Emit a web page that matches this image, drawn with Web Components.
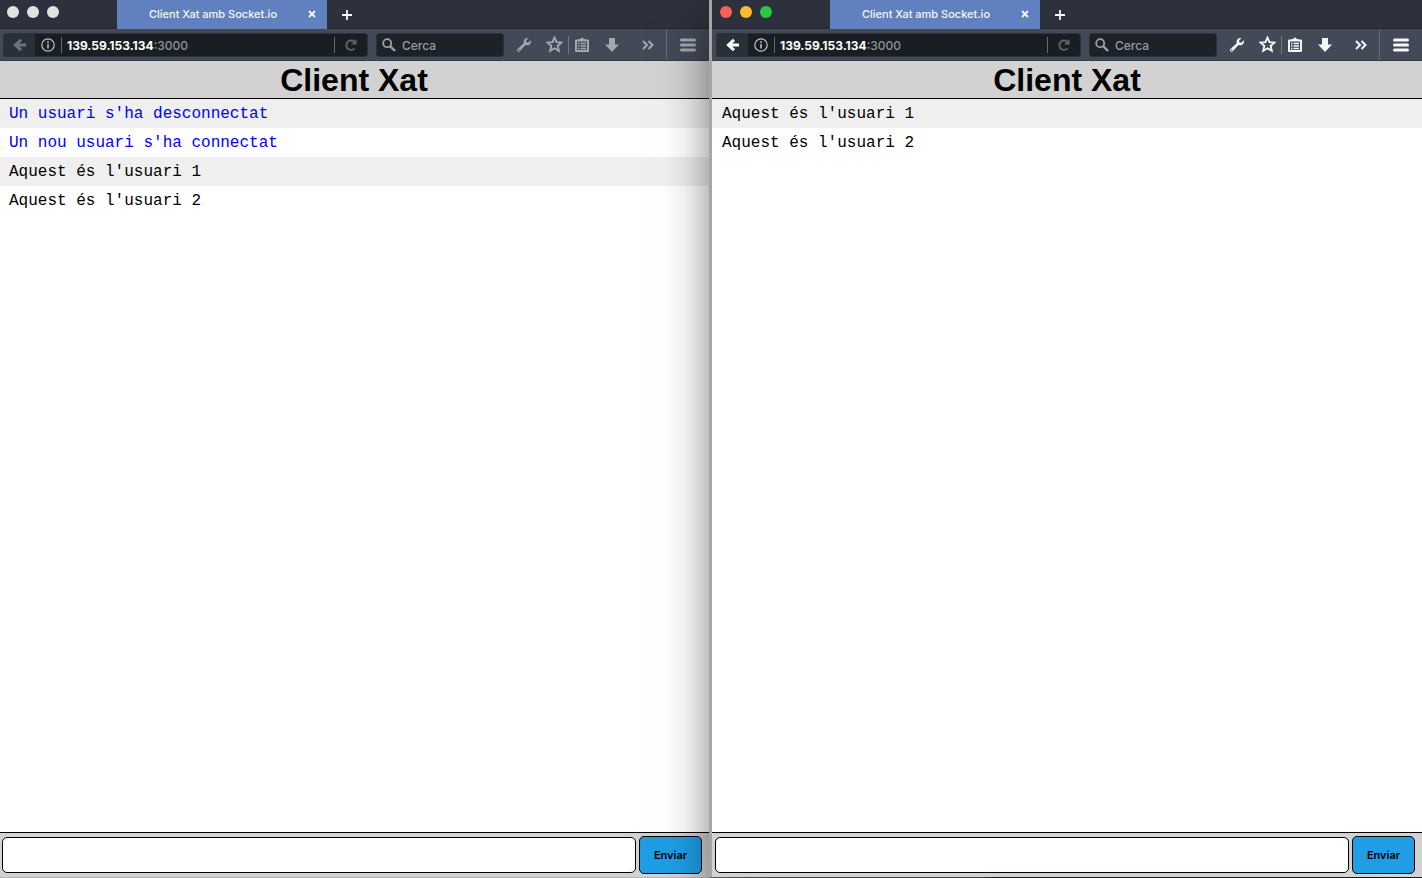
<!DOCTYPE html>
<html lang="ca">
<head>
<meta charset="utf-8">
<title>Client Xat amb Socket.io</title>
<style>
html, body { height: 100%; margin: 0; }
body { font-family: Inter, "Liberation Sans", sans-serif; overflow: hidden; background: #bdbdbd; }
</style>
</head>
<body>
<split-desktop>
  <browser-window>
    <chat-page>
      <chat-message kind="system">Un usuari s'ha desconnectat</chat-message>
      <chat-message kind="system">Un nou usuari s'ha connectat</chat-message>
      <chat-message>Aquest és l'usuari 1</chat-message>
      <chat-message>Aquest és l'usuari 2</chat-message>
    </chat-page>
  </browser-window>
  <browser-window active>
    <chat-page>
      <chat-message>Aquest és l'usuari 1</chat-message>
      <chat-message>Aquest és l'usuari 2</chat-message>
    </chat-page>
  </browser-window>
</split-desktop>

<script>
const define = (name, html) => {
  const template = document.createElement('template');
  template.innerHTML = html;
  customElements.define(name, class extends HTMLElement {
    constructor() {
      super();
      this.attachShadow({ mode: 'open' }).append(template.content.cloneNode(true));
    }
  });
};

define('split-desktop', `
<style>
:host { display: grid; grid-template-columns: 1fr 1fr; gap: 3px; height: 100vh; margin-left: -1px; padding-bottom: 1px; box-sizing: border-box; background: linear-gradient(90deg, #b4b4b4 50%, #777 50% 69%, #3a2519 70%); overflow: hidden; }
</style>
<slot></slot>`);

define('window-tabs', `
<style>
:host { display: flex; align-items: stretch; height: 28px; background: #2d313d; border-bottom: 1px solid #20242d; }
.lights { display: flex; gap: 8px; width: 118px; box-sizing: border-box; padding: 6px 8px; }
.lights i { width: 12px; height: 12px; border-radius: 50%; background: #e1e1e1; }
:host([active]) .lights i:nth-child(1) { background: #ff5f57; }
:host([active]) .lights i:nth-child(2) { background: #ffbd2e; }
:host([active]) .lights i:nth-child(3) { background: #28ca42; }
.tab { display: flex; align-items: center; width: 210px; height: 29px; box-sizing: border-box; padding: 0 8px 1px 4px; background: #6180c0; color: #f5f7fa; font-size: 11px; font-weight: 500; }
.tab span { flex: 1; text-align: center; white-space: nowrap; }
button { display: flex; align-items: center; justify-content: center; border: 0; padding: 0; background: none; color: #f5f7fa; }
.close { width: 14px; height: 14px; }
.add { width: 40px; height: 29px; }
</style>
<div class="lights"><i></i><i></i><i></i></div>
<div class="tab"><span>Client Xat amb Socket.io</span>
<button class="close" aria-label="Tanca"><svg width="8" height="8" viewBox="0 0 8 8"><path d="M1 1l6 6M7 1L1 7" stroke="currentColor" stroke-width="1.8"/></svg></button></div>
<button class="add" aria-label="Pestanya nova"><svg width="10" height="10" viewBox="0 0 10 10"><path d="M5 0v10M0 5h10" stroke="currentColor" stroke-width="1.8"/></svg></button>`);

define('window-toolbar', `
<style>
:host { display: flex; align-items: center; height: 31px; background: #434957; border-bottom: 1px solid #353b48; --icon: #a5a8af; padding-left: 4px; }
:host([active]) { --icon: #f5f6f8; }
button { display: flex; align-items: center; justify-content: center; border: 0; padding: 0; background: none; color: var(--icon); height: 24px; flex: none; }
svg { display: block; }
.url, .search { display: flex; align-items: center; height: 24px; box-sizing: border-box; border: 1px solid #2c323d; border-radius: 3px; background: #191e22; overflow: hidden; }
.url { flex: 1; min-width: 0; font-size: 12px; color: #8f9396; }
.back { width: 31px; background: #293038; color: #6d7278; }
:host([active]) .back { color: #fff; }
.info { width: 26px; color: #c3c5c7; }
.rule { width: 1px; height: 16px; background: #65696d; flex: none; }
.addr { flex: 1; padding: 1px 0 0 5px; white-space: nowrap; font-weight: 500; }
.addr b { color: #fff; font-weight: 700; }
.reload { width: 32px; color: #606468; }
.search { width: 128px; margin: 0 4px 0 8px; background: #1d2229; color: #9da0a3; padding-left: 5px; gap: 6px; }
.search svg { flex: none; }
input { border: 0; padding: 1px 0 0; margin: 0; background: none; width: 90px; font: 500 12px Inter, sans-serif; color: #9b9da0; outline: 0; }
input::placeholder { color: #9b9da0; opacity: 1; }
.wrench { width: 32px; }
.star { width: 28px; }
.sep { width: 1px; height: 18px; background: #737883; }
.list { width: 25px; }
.down { width: 36px; }
.more { width: 36px; }
.tall { width: 1px; height: 31px; background: #646975; }
.menu { width: 42px; }
</style>
<div class="url">
<button class="back" aria-label="Enrere"><svg width="14" height="14" viewBox="0 0 14 14"><path d="M8 1.8L2.4 7 8 12.2M3 7h10" fill="none" stroke="currentColor" stroke-width="3"/></svg></button>
<button class="info" aria-label="Informació"><svg width="14" height="14" viewBox="0 0 14 14"><circle cx="7" cy="7" r="6.2" fill="none" stroke="currentColor" stroke-width="1.2"/><path d="M7 6v4.5M7 3.3v1.6" stroke="currentColor" stroke-width="1.5"/></svg></button>
<i class="rule"></i><span class="addr"><b>139.59.153.134</b>:3000</span><i class="rule"></i>
<button class="reload" aria-label="Recarrega"><svg width="12" height="12" viewBox="0 0 12 12"><path d="M9.6 9.3A4.700 4.700 0 1 1 9.200 2.700" fill="none" stroke="currentColor" stroke-width="1.9"/><path d="M11.500 0v5.500H6z" fill="currentColor"/></svg></button>
</div>
<label class="search"><svg width="14" height="14" viewBox="0 0 14 14"><circle cx="5.2" cy="5.2" r="4" fill="none" stroke="currentColor" stroke-width="1.8"/><path d="M8 8l5 5" stroke="currentColor" stroke-width="2.4"/></svg><input placeholder="Cerca" aria-label="Cerca"></label>
<button class="wrench" aria-label="Eines"><svg width="16" height="16" viewBox="0 0 16 16"><path d="M14.8 3.2L12.2 5.7 10.4 5.4 10.1 3.6 12.6 1.1C10.2.3 7.5 2 7.6 4.7L7.8 6.2 1.2 12.2C.1 13.4 1.9 15.6 3.5 14.5L9.5 8.1 11 8.3C13.9 8.4 15.6 5.6 14.8 3.2z" fill="currentColor"/><circle cx="2.7" cy="13.1" r=".8" fill="#434957"/></svg></button>
<button class="star" aria-label="Preferits"><svg width="17" height="17" viewBox="0 0 17 17"><path d="M8.5 1.6l2 4.5 4.9.5-3.7 3.3 1.1 4.9-4.3-2.5-4.3 2.5 1.1-4.9L1.6 6.6l4.9-.5z" fill="none" stroke="currentColor" stroke-width="1.9"/></svg></button>
<i class="sep"></i>
<button class="list" aria-label="Llista"><svg width="14" height="15" viewBox="0 0 14 15"><path d="M1 3.500h12v10.500H1z" fill="none" stroke="currentColor" stroke-width="2" stroke-linejoin="round"/><path d="M3.500 4V2h2a1.500 1.500 0 0 1 3 0h2v2z" fill="currentColor"/><path d="M3 6.500h1.500M5.500 6.500H11M3 9h1.500M5.500 9H11M3 11.500h1.500M5.500 11.500H11" stroke="currentColor" stroke-width="1.300"/></svg></button>
<button class="down" aria-label="Baixades"><svg width="14" height="14" viewBox="0 0 14 14"><path d="M4 0h6v6.500h4L7 14 0 6.500h4z" fill="currentColor"/></svg></button>
<button class="more" aria-label="Més"><svg width="12" height="10" viewBox="0 0 12 10"><path d="M1 1l4 4-4 4M6.500 1l4 4-4 4" fill="none" stroke="currentColor" stroke-width="2"/></svg></button>
<i class="tall"></i>
<button class="menu" aria-label="Menú"><svg width="16" height="14" viewBox="0 0 16 14"><path d="M1.500 2h13M1.500 7h13M1.500 12h13" stroke="currentColor" stroke-width="3" stroke-linecap="round"/></svg></button>`);

const windowTemplate = document.createElement('template');
windowTemplate.innerHTML = `
<style>
:host { display: flex; flex-direction: column; min-width: 0; position: relative; background: #fff; }
:host([active]) { z-index: 1; box-shadow: -3px 0 0 #a6a6a6, 0 20px 45px rgba(0,0,0,.55); }
.view { flex: 1; display: flex; min-height: 0; }
</style>
<window-tabs></window-tabs>
<window-toolbar></window-toolbar>
<div class="view"><slot></slot></div>`;
customElements.define('browser-window', class extends HTMLElement {
  constructor() {
    super();
    this.attachShadow({ mode: 'open' }).append(windowTemplate.content.cloneNode(true));
  }
  connectedCallback() {
    const active = this.hasAttribute('active');
    for (const bar of this.shadowRoot.querySelectorAll('window-tabs, window-toolbar')) bar.toggleAttribute('active', active);
  }
});

define('chat-page', `
<style>
:host { display: flex; flex-direction: column; flex: 1; min-width: 0; background: #fff; font-family: "Liberation Sans", Arial, sans-serif; }
h1 { margin: 0; padding-top: 2px; background: #d2d2d2; border-bottom: 1px solid #000; text-align: center; font-size: 32px; line-height: 35px; color: #000; }
.log { flex: 1; }
form { display: flex; align-items: center; gap: 3px; margin: 0; border-top: 1px solid #000; background: #d2d2d2; padding: 3px 7px 3px 3px; }
input { flex: 1; min-width: 0; height: 36px; box-sizing: border-box; border: 1px solid #000; border-radius: 5px; background: #fff; padding: 0 10px; font-size: 16px; }
button { width: 63px; height: 38px; border: 1px solid #000; border-radius: 5px; background: #1f9ee5; color: #000; padding: 0; font: 600 11px Inter, sans-serif; }
</style>
<h1>Client Xat</h1>
<div class="log"><slot></slot></div>
<form><input type="text" aria-label="Missatge"><button type="button">Enviar</button></form>`);

define('chat-message', `
<style>
:host { display: block; padding: 6px 10px 4px; font: 16px/19px "Liberation Mono", "Courier New", monospace; color: #000; }
:host(:nth-child(odd)) { background: #efefef; }
:host([kind="system"]) { color: #00f; }
</style>
<slot></slot>`);
</script>
</body>
</html>
